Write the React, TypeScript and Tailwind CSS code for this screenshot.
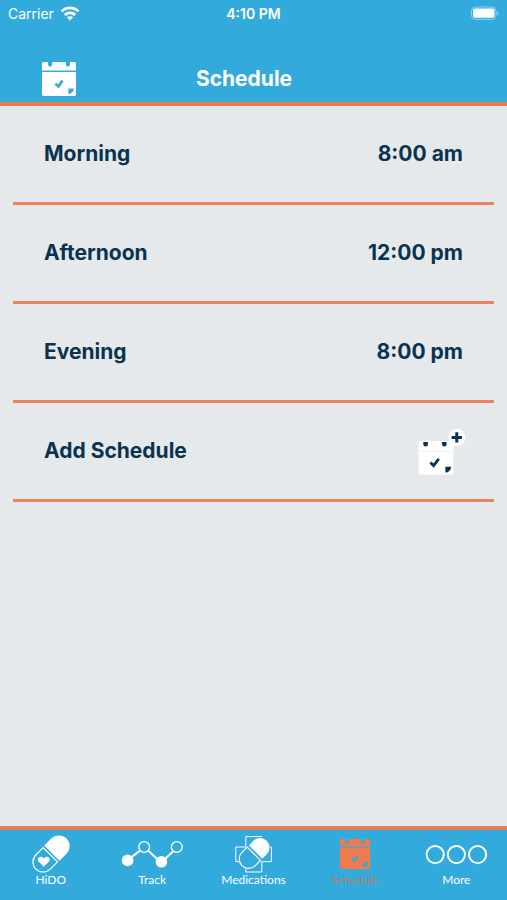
import React from 'react';

interface ScheduleEntry {
  label: string;
  time: string;
}

const schedules: ScheduleEntry[] = [
  { label: 'Morning', time: '8:00 am' },
  { label: 'Afternoon', time: '12:00 pm' },
  { label: 'Evening', time: '8:00 pm' }
];

const WifiIcon: React.FC = () => (
  <svg className="h-4 w-5" viewBox="0 0 20 16" fill="none" stroke="currentColor" strokeWidth="2.8" aria-hidden="true">
    <path d="M1.6 5.4C6.2 0.6 13.8 0.6 18.4 5.4" />
    <path d="M4.8 9C7.7 6.2 12.3 6.2 15.2 9" />
    <path d="M10 14.4L6.9 11.3C8.6 9.8 11.4 9.8 13.1 11.3Z" fill="currentColor" stroke="none" />
  </svg>
);

const BatteryIcon: React.FC = () => (
  <svg className="h-4 w-7" viewBox="0 0 28 16" fill="none" aria-hidden="true">
    <rect x="0.5" y="1" width="24.5" height="12.4" rx="4" stroke="#8fd0ee" />
    <rect x="2" y="2.6" width="21.5" height="9.2" rx="2" fill="white" />
    <path d="M26.2 5C28 5.8 28 8.4 26.2 9.2Z" fill="#8fd0ee" />
  </svg>
);

const CalendarIcon: React.FC<{ className: string }> = ({ className }) => (
  <svg className={className} viewBox="0 0 36 36" aria-hidden="true">
    <path
      d="M2.5 1H7V3.6a2.1 2.1 0 0 0 4.2 0V1H24.8V3.6a2.1 2.1 0 0 0 4.2 0V1H33.5A1.8 1.8 0 0 1 35 2.8V9.6H1V2.8A1.8 1.8 0 0 1 2.5 1Z"
      fill="currentColor"
    />
    <path
      fillRule="evenodd"
      d="M1 11H35V33.2A1.8 1.8 0 0 1 33.2 35H2.8A1.8 1.8 0 0 1 1 33.2ZM13.4 23.4L15.4 21.8L17.2 23.6L20.4 18.8L22.6 20.2L17.8 27.4ZM27.4 27.4H33L32 30.6L29.6 32.6L27.4 33.2Z"
      fill="currentColor"
    />
  </svg>
);

const AddCalendarIcon: React.FC = () => (
  <svg className="h-12 w-12" viewBox="0 0 48 48" aria-hidden="true">
    <rect x="0.4" y="14" width="35" height="33.4" rx="2" fill="white" />
    <path d="M0.4 24.4H35.4" stroke="#eef1f3" />
    <g fill="#0a3350">
      <path d="M5.3 15H9.9V17.2a2.3 2.3 0 0 1 -4.6 0Z" />
      <path d="M24 15H28.6V17.2a2.3 2.3 0 0 1 -4.6 0Z" />
      <path d="M27.4 39.8H33.4L32.2 43L29.8 45.2L27.4 45.6Z" />
    </g>
    <path d="M12.4 35.4L15.6 38.6L20.8 31.8" fill="none" stroke="#0a3350" strokeWidth="2.8" />
    <circle cx="38.8" cy="10.4" r="8.6" fill="white" />
    <path d="M38.8 5.2V15.6M33.6 10.4H44" stroke="#0a3350" strokeWidth="3" />
  </svg>
);

const PillIcon: React.FC = () => (
  <svg className="h-10 w-10" viewBox="0 0 40 40" fill="none" stroke="white" aria-hidden="true">
    <g transform="rotate(45 20 20)">
      <path d="M9.3 18.8V8.8a10.7 10.7 0 0 1 21.4 0V18.8Z" fill="white" stroke="none" />
      <path d="M9.9 21V31.2a10.1 10.1 0 0 0 20.2 0V21Z" strokeWidth="1.2" />
    </g>
    <path
      d="M12.8 32.8L7.6 27.6C4.8 24 10 20.4 12.8 24.4C15.6 20.4 20.8 24 18 27.6Z"
      fill="white"
      stroke="none"
    />
  </svg>
);

const TrackIcon: React.FC = () => (
  <svg className="h-10 w-16" viewBox="0 0 64 40" fill="none" stroke="white" aria-hidden="true">
    <path d="M7 26.6L20 16.6M28 16.6L41 28.6M41 28.6L53 17.6" strokeWidth="2" />
    <circle cx="7.6" cy="26.4" r="5.8" fill="white" stroke="none" />
    <circle cx="24.2" cy="13" r="5.4" strokeWidth="1.3" />
    <circle cx="41.4" cy="27.8" r="5.8" fill="white" stroke="none" />
    <circle cx="56.8" cy="13" r="5.4" strokeWidth="1.3" />
  </svg>
);

const MedicationsIcon: React.FC = () => (
  <svg className="h-10 w-10" viewBox="0 0 40 40" fill="none" stroke="white" aria-hidden="true">
    <path d="M12.8 2.6H28.8V13H38.4V27.6H28.8V38H12.8V27.6H2.8V13H12.8Z" />
    <g transform="rotate(45 21.4 19.2)">
      <path d="M11.4 18V11.2a10 10 0 0 1 20 0V18Z" fill="white" stroke="#33aadc" />
      <path d="M12 20V27.4a9.4 9.4 0 0 0 18.8 0V20Z" fill="#33aadc" strokeWidth="1.2" />
    </g>
  </svg>
);

const MoreIcon: React.FC = () => (
  <svg className="h-10 w-16" viewBox="0 0 64 40" fill="none" stroke="white" strokeWidth="1.9" aria-hidden="true">
    <circle cx="11.2" cy="20.6" r="8.6" />
    <circle cx="32.4" cy="20.6" r="8.6" />
    <circle cx="53.6" cy="20.6" r="8.6" />
  </svg>
);

const tabs = [
  { name: 'HiDO', icon: <PillIcon />, active: false },
  { name: 'Track', icon: <TrackIcon />, active: false },
  { name: 'Medications', icon: <MedicationsIcon />, active: false },
  { name: 'Schedule', icon: <CalendarIcon className="h-8 w-8 text-[#ee7b4d]" />, active: true },
  { name: 'More', icon: <MoreIcon />, active: false }
];

const App: React.FC = () => {
  return (
    <div className="flex min-h-screen flex-col bg-[#e5e9ec] font-['Inter',sans-serif] text-[#0a3350]">
      {/* Header */}
      <header className="border-b-4 border-[#e57c52] bg-[#33aadc] text-white">
        <div className="grid h-7 grid-cols-3 items-center px-2 text-sm">
          <div className="flex items-center gap-1.5">
            <span>Carrier</span>
            <WifiIcon />
          </div>
          <span className="text-center font-semibold">4:10 PM</span>
          <div className="flex justify-end">
            <BatteryIcon />
          </div>
        </div>
        <div className="flex items-center pt-8 pr-24 pb-1 pl-10">
          <CalendarIcon className="ml-px h-9 w-9" />
          <h1 className="flex-1 text-center text-[21px] leading-[38px] font-bold">Schedule</h1>
        </div>
      </header>

      {/* Schedule List */}
      <main className="flex-1 px-[13px] text-[21px] font-bold">
        <ul>
          {schedules.map(entry => (
            <li key={entry.label} className="border-b-3 border-[#e8855f]">
              <button type="button" className="flex h-24 w-full items-center justify-between px-[31px]">
                <span>{entry.label}</span>
                <span>{entry.time}</span>
              </button>
            </li>
          ))}
          <li className="border-b-3 border-[#e8855f]">
            <button type="button" className="flex h-24 w-full items-center justify-between pr-7 pl-[31px]">
              <span>Add Schedule</span>
              <AddCalendarIcon />
            </button>
          </li>
        </ul>
      </main>

      {/* Tab Bar */}
      <nav className="grid grid-cols-5 border-t-4 border-[#e57c52] bg-[#33aadc] pt-1 pb-3.5">
        {tabs.map(tab => (
          <a
            key={tab.name}
            href={`#${tab.name.toLowerCase()}`}
            aria-current={tab.active ? 'page' : undefined}
            className={`flex flex-col items-center font-['Lato',sans-serif] text-xs leading-3 ${tab.active ? 'text-[#b5806f]' : 'text-white'}`}
          >
            <span className="flex h-10 items-center">{tab.icon}</span>
            <span>{tab.name}</span>
          </a>
        ))}
      </nav>
    </div>
  );
};

export default App;
